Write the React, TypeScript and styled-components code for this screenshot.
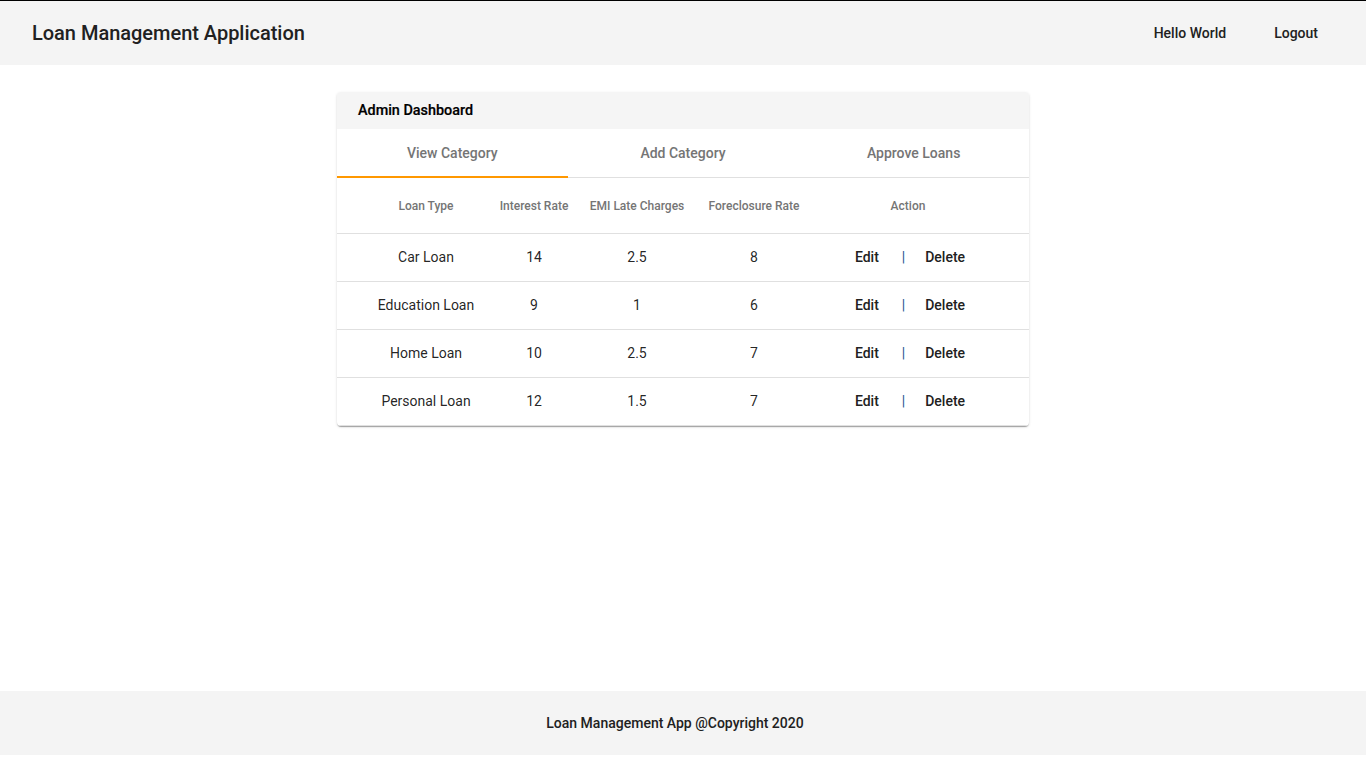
import React, { useState } from "react";
import styled, { createGlobalStyle } from "styled-components";

const GlobalStyle = createGlobalStyle`
  html, body { margin: 0; padding: 0; }
  body {
    font-family: Roboto, "Liberation Sans", Arial, sans-serif;
    background: #ffffff;
    border-top: 1px solid #000000;
    color: rgba(0, 0, 0, 0.87);
  }
  * { box-sizing: border-box; }
`;

const Page = styled.div`
  display: flex;
  flex-direction: column;
  min-height: calc(100vh - 1px);
`;

const TopBar = styled.header`
  height: 64px;
  background: #f4f4f4;
  display: flex;
  align-items: center;
  justify-content: space-between;
  padding: 0 48px 0 32px;
`;

const Brand = styled.div`
  font-size: 20px;
  font-weight: 500;
  color: #212121;
  letter-spacing: -0.02px;
`;

const Nav = styled.nav`
  display: flex;
  align-items: center;
  gap: 48px;
`;

const NavItem = styled.span`
  font-size: 14px;
  font-weight: 500;
  color: #212121;
`;

const Main = styled.main`
  flex: 1;
  display: flex;
  justify-content: center;
  align-items: flex-start;
  padding-top: 27px;
`;

const Card = styled.section`
  width: 692px;
  background: #fff;
  border-radius: 4px;
  box-shadow: 0px 2px 1px -1px rgba(0, 0, 0, 0.2),
    0px 1px 1px 0px rgba(0, 0, 0, 0.14), 0px 1px 3px 0px rgba(0, 0, 0, 0.12);
  overflow: hidden;
`;

const CardHeader = styled.div`
  height: 37px;
  background: #f5f5f5;
  display: flex;
  align-items: center;
  padding-left: 21px;
  font-size: 14.4px;
  font-weight: 500;
  color: #000;
  -webkit-text-stroke: 0.2px #000;
`;

const Tabs = styled.div`
  display: grid;
  grid-template-columns: repeat(3, 1fr);
  border-bottom: 1px solid #e0e0e0;
`;

const Tab = styled.button<{ $active?: boolean }>`
  height: 49px;
  border: none;
  background: transparent;
  font-family: inherit;
  font-size: 14px;
  font-weight: 500;
  color: #757575;
  cursor: pointer;
  padding: 0;
  padding-top: 1px;
  border-bottom: 2px solid ${(p) => (p.$active ? "#ff9800" : "transparent")};
  margin-bottom: -1px;
`;

const Row = styled.div<{ $head?: boolean }>`
  display: grid;
  grid-template-columns: 140px 76px 130px 104px 204px;
  padding: 0 19px ${(p) => (p.$head ? "0" : "2px")};
  height: ${(p) => (p.$head ? "56px" : "48px")};
  align-items: center;
  border-bottom: 1px solid #e0e0e0;
`;

const HeadCell = styled.div`
  text-align: center;
  font-size: 12px;
  font-weight: 500;
  color: #757575;
  white-space: nowrap;
`;

const Cell = styled.div`
  text-align: center;
  font-size: 14px;
  color: rgba(0, 0, 0, 0.87);
  white-space: nowrap;
`;

const Actions = styled.div`
  display: flex;
  justify-content: center;
  align-items: center;
  font-size: 14px;
  padding-left: 4px;
`;

const ActionLink = styled.span`
  font-weight: 500;
  color: #212121;
  cursor: pointer;
`;

const Divider = styled.span`
  color: #1a4f8f;
  margin: 0 20px 0 23px;
`;

const Footer = styled.footer`
  height: 64px;
  background: #f4f4f4;
  display: flex;
  align-items: center;
  justify-content: center;
  font-size: 14px;
  font-weight: 500;
  color: #212121;
  margin-bottom: 13px;
  padding-right: 16px;
`;

const loans = [
  { type: "Car Loan", rate: "14", emi: "2.5", fc: "8" },
  { type: "Education Loan", rate: "9", emi: "1", fc: "6" },
  { type: "Home Loan", rate: "10", emi: "2.5", fc: "7" },
  { type: "Personal Loan", rate: "12", emi: "1.5", fc: "7" },
];

const tabs = ["View Category", "Add Category", "Approve Loans"];

export default function App() {
  const [active, setActive] = useState(0);
  return (
    <>
      <GlobalStyle />
      <Page>
        <TopBar>
          <Brand>Loan Management Application</Brand>
          <Nav>
            <NavItem>Hello World</NavItem>
            <NavItem>Logout</NavItem>
          </Nav>
        </TopBar>
        <Main>
          <Card>
            <CardHeader>Admin Dashboard</CardHeader>
            <Tabs>
              {tabs.map((t, i) => (
                <Tab key={t} $active={i === active} onClick={() => setActive(i)}>
                  {t}
                </Tab>
              ))}
            </Tabs>
            <Row $head>
              <HeadCell>Loan Type</HeadCell>
              <HeadCell>Interest Rate</HeadCell>
              <HeadCell>EMI Late Charges</HeadCell>
              <HeadCell>Foreclosure Rate</HeadCell>
              <HeadCell>Action</HeadCell>
            </Row>
            {loans.map((l) => (
              <Row key={l.type}>
                <Cell>{l.type}</Cell>
                <Cell>{l.rate}</Cell>
                <Cell>{l.emi}</Cell>
                <Cell>{l.fc}</Cell>
                <Actions>
                  <ActionLink>Edit</ActionLink>
                  <Divider>|</Divider>
                  <ActionLink>Delete</ActionLink>
                </Actions>
              </Row>
            ))}
          </Card>
        </Main>
        <Footer>Loan Management App @Copyright 2020</Footer>
      </Page>
    </>
  );
}
